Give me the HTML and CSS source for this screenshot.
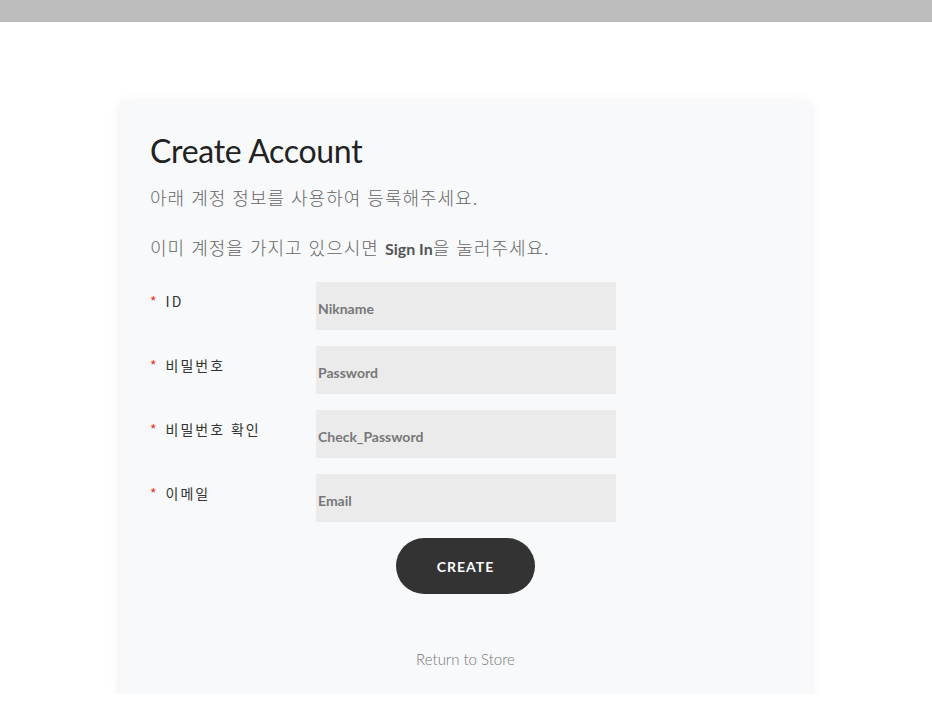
FILE: index.html
```html
<!DOCTYPE html>
<html lang="ko">
<head>
<meta charset="utf-8">
<title>Create Account</title>
<link rel="stylesheet" href="styles.css">
</head>
<body>
<div class="topbar"></div>
<main class="page">
  <section class="card">
    <h1 class="title">Create Account</h1>
    <p class="desc">아래 계정 정보를 사용하여 등록해주세요.</p>
    <p class="desc">이미 계정을 가지고 있으시면 <b class="signin">Sign In</b>을 눌러주세요.</p>
    <form class="form">
      <div class="row">
        <label class="label"><span class="req">*</span>ID</label>
        <input class="input" type="text" placeholder="Nikname">
      </div>
      <div class="row">
        <label class="label"><span class="req">*</span>비밀번호</label>
        <input class="input" type="password" placeholder="Password">
      </div>
      <div class="row">
        <label class="label"><span class="req">*</span>비밀번호 확인</label>
        <input class="input" type="password" placeholder="Check_Password">
      </div>
      <div class="row">
        <label class="label"><span class="req">*</span>이메일</label>
        <input class="input" type="email" placeholder="Email">
      </div>
      <div class="actions">
        <button class="btn" type="button">CREATE</button>
      </div>
    </form>
    <a class="return" href="#">Return to Store</a>
  </section>
</main>
</body>
</html>
```
FILE: styles.css
```css
* { box-sizing: border-box; }
html, body { margin: 0; padding: 0; background: #fff; }
body { font-family: "Noto Sans", "Noto Sans CJK KR", sans-serif; }
.topbar { height: 22px; background: #bdbdbd; }
.page { display: flex; justify-content: center; padding: 79px 1px 0 0; }
.card {
  width: 691px; height: 593px;
  background: #f8f9fa;
  box-shadow: 0 2px 12px rgba(0,0,0,0.08);
  padding: 30px 30px 0 30px;
  display: flex; flex-direction: column;
}
.title {
  margin: 0; font-family: "Lato", sans-serif; font-weight: 400;
  font-size: 32px; color: #222; line-height: 40px; letter-spacing: -0.3px;
}
.desc {
  margin: 14px 0 0; font-family: "Noto Sans CJK KR", sans-serif; font-weight: 300;
  font-size: 18px; color: #666; line-height: 24px; letter-spacing: 1px;
}
.desc + .desc { margin-top: 26px; }
.signin { font-family: "Lato", sans-serif; font-weight: 700; font-size: 16px; color: #555; letter-spacing: 0; }
.form { margin-top: 21px; display: flex; flex-direction: column; gap: 16px; }
.row { display: flex; align-items: flex-start; }
.label {
  width: 166px; padding-top: 9px; font-family: "Noto Sans CJK KR", sans-serif;
  font-size: 14px; color: #333; letter-spacing: 2px; display: flex; gap: 9px;
}
.req { color: #e32; letter-spacing: 0; }
.input {
  width: 300px; height: 48px; border: 0; background: #ebebeb; outline: none;
  padding: 4px 2px 0; font-family: "Lato", sans-serif; font-size: 14px; color: #777;
}
.input::placeholder { color: #777; font-weight: 700; opacity: 1; }
.actions { display: flex; justify-content: center; }
.btn {
  width: 139px; height: 56px; border: 0; border-radius: 28px; background: #333;
  color: #fff; font-family: "Lato", sans-serif; font-weight: 700; font-size: 14px;
  letter-spacing: 1px; cursor: pointer;
}
.return {
  margin-top: 56px; align-self: center; font-family: "Lato", sans-serif; font-weight: 300;
  font-size: 15px; color: #777; text-decoration: none;
}
```
